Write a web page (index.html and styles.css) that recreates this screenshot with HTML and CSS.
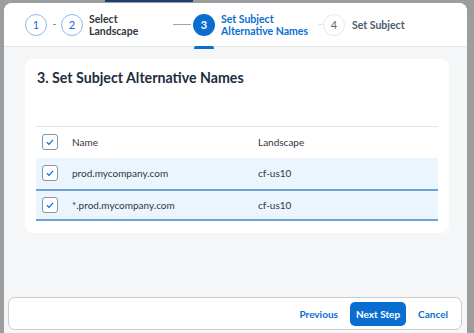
FILE: index.html
```html
<!DOCTYPE html>
<html lang="en">
<head>
  <meta charset="UTF-8">
  <title>Set Subject Alternative Names</title>
  <link rel="stylesheet" href="styles.css">
</head>
<body>
  <div class="bg-tab"></div>

  <div class="dialog">
    <!-- wizard steps -->
    <div class="wizard">
      <div class="step done">1</div>
      <span class="dot"></span>
      <div class="step done">2</div>
      <div class="step-label first-label">Select<br>Landscape</div>
      <span class="line"></span>
      <div class="step current">3</div>
      <div class="step-label current-label">Set Subject<br>Alternative Names</div>
      <span class="dot light"></span>
      <div class="step todo">4</div>
      <div class="step-label todo-label">Set Subject</div>
    </div>

    <div class="content">
      <div class="card">
        <h2>3. Set Subject Alternative Names</h2>
        <table class="names">
          <thead>
            <tr>
              <th class="sel"><span class="cb"><svg viewBox="0 0 16 16"><path d="M4.5 8.3l2.4 2.4 4.6-5.2"/></svg></span></th>
              <th>Name</th>
              <th class="land">Landscape</th>
            </tr>
          </thead>
          <tbody>
            <tr>
              <td class="sel"><span class="cb"><svg viewBox="0 0 16 16"><path d="M4.5 8.3l2.4 2.4 4.6-5.2"/></svg></span></td>
              <td>prod.mycompany.com</td>
              <td class="land">cf-us10</td>
            </tr>
            <tr class="last">
              <td class="sel"><span class="cb"><svg viewBox="0 0 16 16"><path d="M4.5 8.3l2.4 2.4 4.6-5.2"/></svg></span></td>
              <td>*.prod.mycompany.com</td>
              <td class="land">cf-us10</td>
            </tr>
          </tbody>
        </table>
      </div>
    </div>

    <div class="footer">
      <button class="btn-text">Previous</button>
      <button class="btn-primary">Next Step</button>
      <button class="btn-text">Cancel</button>
    </div>
  </div>
</body>
</html>
```

FILE: styles.css
```css
* { box-sizing: border-box; margin: 0; padding: 0; }
body {
  font-family: Lato, 'Open Sans', sans-serif;
  background: #9c9d9f; color: #1d2d3e;
  width: 474px; height: 333px; overflow: hidden;
  padding: 3px 7px 0 4px; position: relative;
}
.bg-tab { position: absolute; top: 0; left: 105px; width: 88px; height: 2px; background: #1f3d6e; }

.dialog {
  height: 330px; background: #f5f6f7;
  border-radius: 8px 8px 0 0; overflow: hidden;
  display: flex; flex-direction: column;
}

/* Wizard kopfzeile */
.wizard {
  height: 44px; flex: none; background: #fff;
  border-bottom: 1px solid #e4e6e8;
  display: flex; align-items: center; padding-left: 21px;
}
.step {
  width: 22px; height: 22px; border-radius: 50%;
  display: flex; align-items: center; justify-content: center;
  font-size: 11px; flex: none; position: relative;
}
.step.done { border: 1px solid #8fb8e6; color: #0a6ed1; }
.step.current { background: #0a6ed1; color: #fff; font-weight: 700; }
.step.current::after {
  content: ""; position: absolute; left: 1px; right: 1px; bottom: -13px;
  height: 3px; background: #0a6ed1; border-radius: 2px 2px 0 0;
}
.step.todo { border: 1px solid #e6e9ec; color: #556b82; }
.dot { width: 3px; height: 1px; background: #8396a8; margin: 0 5px 0 6px; }
.dot.light { background: #d5dade; margin: 0 1px 0 0; }
.line { width: 18px; height: 1px; background: #9aa6b2; margin: 0 2px 0 0; }
.step-label {
  font-size: 10.5px; font-weight: 700; line-height: 12px;
  margin-left: 6px; color: #32363a; flex: none; white-space: nowrap;
}
.first-label { width: 84px; }
.current-label { color: #0a6ed1; width: 98px; }
.todo-label { color: #4a5b6c; margin-left: 7px; }

/* Inhalt */
.content { flex: 1; padding: 12px 18px 0 21px; }
.card {
  background: #fff; border-radius: 8px;
  height: 174px; padding: 8px 11px 0;
}
h2 { font-size: 14.2px; font-weight: 700; padding-left: 1px; line-height: 22px; margin-bottom: 37px; }
.names { width: 100%; border-collapse: collapse; font-size: 10px; }
.names th, .names td { text-align: left; padding: 0; vertical-align: middle; }
.names th { font-weight: 400; height: 31px; border-top: 1px solid #e1e3e5; color: #32363a; }
.names td { height: 32px; background: #ebf5fe; border-bottom: 2px solid #6e9fd6; color: #32363a; }
.names tr.last td { height: 30px; }
.sel { width: 36px; padding-left: 6px !important; }
.land { width: 180px; }
.cb {
  display: block; width: 16px; height: 16px;
  border: 1px solid #8396a8; border-radius: 3px; background: #fff;
}
.cb svg { display: block; width: 14px; height: 14px; fill: none; stroke: #0a6ed1; stroke-width: 1.4; }

/* Fußzeile */
.footer {
  height: 33px; flex: none; margin: 0 5px 3px 4px;
  background: #fff; border: 1px solid #c9cbcd; border-radius: 7px;
  display: flex; align-items: center; justify-content: flex-end;
  padding-right: 7px; gap: 6px;
}
.footer button {
  font-family: inherit; font-size: 10px; font-weight: 700;
  border: none; background: none; cursor: pointer;
  height: 24px; padding: 0 6px; border-radius: 5px;
}
.btn-text { color: #0a6ed1; }
.btn-primary { background: #0a6ed1 !important; color: #fff; }
```
